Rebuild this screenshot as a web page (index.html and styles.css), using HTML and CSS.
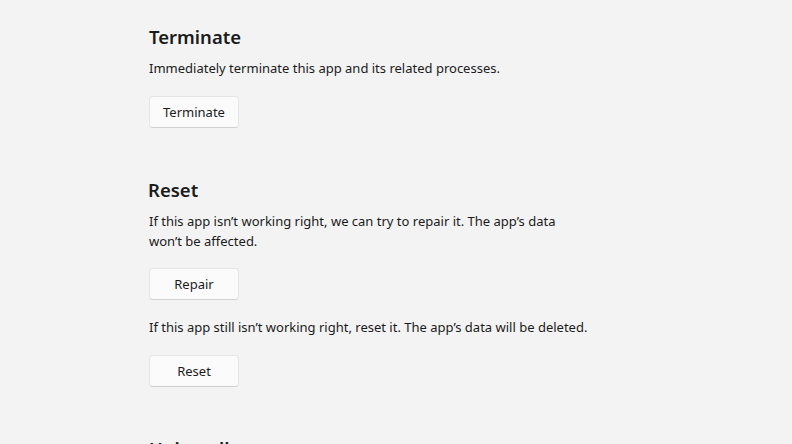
FILE: index.html
```html
<!DOCTYPE html>
<html lang="en">
<head>
<meta charset="utf-8">
<title>App settings</title>
<link rel="stylesheet" href="styles.css">
</head>
<body>
<main class="page">
  <section class="group">
    <h2 class="title">Terminate</h2>
    <p class="desc">Immediately terminate this app and its related processes.</p>
    <button class="btn">Terminate</button>
  </section>
  <section class="group">
    <h2 class="title title-reset">Reset</h2>
    <p class="desc">If this app isn’t working right, we can try to repair it. The app’s data won’t be affected.</p>
    <button class="btn btn-tight">Repair</button>
    <p class="desc desc-after">If this app still isn’t working right, reset it. The app’s data will be deleted.</p>
    <button class="btn">Reset</button>
  </section>
  <section class="group">
    <h2 class="title">Uninstall</h2>
  </section>
</main>
</body>
</html>
```

FILE: styles.css
```css
html, body {
  margin: 0;
  padding: 0;
  background: #f3f3f3;
  height: 100%;
  overflow: hidden;
}
body {
  font-family: "Noto Sans", "Open Sans", sans-serif;
  color: #1b1b1b;
}
.page {
  display: flex;
  flex-direction: column;
  gap: 49px;
  padding: 24px 0 0 149px;
  width: 442px;
}
.group {
  display: flex;
  flex-direction: column;
  align-items: flex-start;
}
.title {
  margin: 0;
  font-size: 18.5px;
  line-height: 26px;
  font-weight: 600;
}
.title-reset { margin-left: -1px; }
.desc {
  margin: 8px 0 0;
  font-size: 13px;
  line-height: 20px;
}
.desc-after { margin-top: 17px; }
.btn {
  margin-top: 18px;
  width: 90px;
  height: 32px;
  font-family: inherit;
  font-size: 13px;
  color: #1b1b1b;
  background: #fbfbfb;
  border: 1px solid #e5e5e5;
  border-bottom-color: #d0d0d0;
  border-radius: 4px;
  padding: 0;
}
.btn-tight { margin-top: 17px; }
```
